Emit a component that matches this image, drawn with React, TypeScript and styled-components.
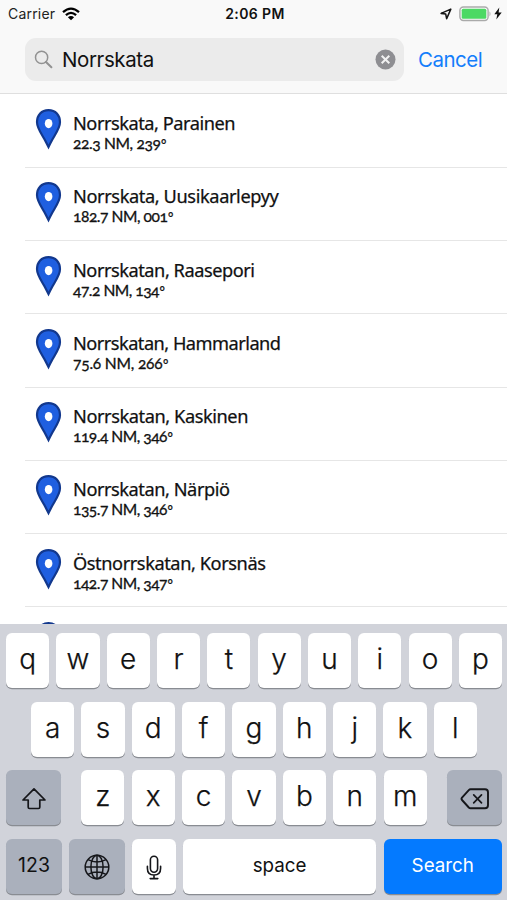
import React from "react";
import styled, { createGlobalStyle } from "styled-components";

const Global = createGlobalStyle`
  * { box-sizing: border-box; }
  body { margin: 0; background: #fff; overflow: hidden; }
`;

const Screen = styled.div`
  width: 507px;
  height: 900px;
  display: flex;
  flex-direction: column;
  overflow: hidden;
  background: #fff;
  color: #111;
  font-family: Inter, "Liberation Sans", sans-serif;
`;

const Header = styled.header`
  height: 94.4px;
  flex: none;
  background: #f9f9f9;
  border-bottom: 1px solid #dfdfdf;
`;

const StatusBar = styled.div`
  height: 27px;
  display: grid;
  grid-template-columns: 1fr auto 1fr;
  align-items: center;
  padding: 0 5px 0 8px;
`;

const Carrier = styled.div`
  display: flex;
  align-items: center;
  gap: 7px;
  font-size: 14px;
  letter-spacing: 0.2px;
  color: #222;
`;

const Clock = styled.div`
  font-size: 14px;
  font-weight: 600;
  letter-spacing: 0.4px;
`;

const StatusIcons = styled.div`
  display: flex;
  align-items: center;
  justify-content: flex-end;
`;

const SearchRow = styled.div`
  display: flex;
  align-items: center;
  padding: 11px 0 0 25px;
`;

const SearchField = styled.div`
  width: 379px;
  height: 43px;
  flex: none;
  display: flex;
  align-items: center;
  padding: 0 8px 0 9px;
  border-radius: 11px;
  background: #ebebeb;
`;

const Query = styled.span`
  flex: 1;
  margin-left: 9px;
  padding-bottom: 1px;
  font-size: 20.5px;
  letter-spacing: -0.4px;
`;

const Cancel = styled.span`
  margin-left: 14px;
  padding-bottom: 1px;
  font-size: 20.5px;
  letter-spacing: -0.5px;
  color: #147efb;
`;

const Results = styled.main`
  height: 529.6px;
  flex: none;
  overflow: hidden;
  padding-left: 25px;
`;

const Result = styled.div`
  height: 73.3px;
  display: flex;
  padding: 14.6px 0 0 10px;
  border-bottom: 1px solid #e6e6e6;
`;

const ResultText = styled.div`
  margin-left: 11px;
  padding-top: 2px;
  font-family: "Noto Sans", sans-serif;
  white-space: nowrap;
`;

const Place = styled.div<{ $track: number }>`
  font-size: 18.2px;
  line-height: 24px;
  -webkit-text-stroke: 0.25px #111;
  letter-spacing: ${(p) => p.$track}px;
`;

const Bearing = styled.div<{ $track: number }>`
  font-family: Lato, "Noto Sans", sans-serif;
  font-size: 15.6px;
  line-height: 17px;
  font-feature-settings: "onum";
  -webkit-text-stroke: 0.3px #111;
  letter-spacing: ${(p) => p.$track}px;
`;

const Degree = styled.span`
  margin-left: 0.5px;
  font-size: 13px;
`;

const Keyboard = styled.section`
  flex: 1;
  display: flex;
  flex-direction: column;
  gap: 13.4px;
  padding: 9.4px 5px 0 6px;
  background: #d1d3da;
`;

const KeyRow = styled.div<{ $inset?: number }>`
  height: 55.1px;
  flex: none;
  display: flex;
  justify-content: space-between;
  padding: 0 ${(p) => p.$inset ?? 0}px;
`;

const KeyGroup = styled.div`
  display: flex;
  gap: 7.2px;
`;

const Key = styled.div<{ $w?: number; $tone?: "white" | "gray" | "blue"; $size?: number }>`
  width: ${(p) => p.$w ?? 43.2}px;
  height: 55.1px;
  flex: none;
  display: flex;
  align-items: center;
  justify-content: center;
  border-radius: 6px;
  background: ${(p) => (p.$tone === "blue" ? "#047aff" : p.$tone === "gray" ? "#aab0bc" : "#fff")};
  color: ${(p) => (p.$tone === "blue" ? "#fff" : "#111")};
  box-shadow: 0 1.3px 0 #898c92;
  font-size: ${(p) => p.$size ?? 28}px;
  font-weight: ${(p) => (p.$size ? 400 : 300)};
  -webkit-text-stroke: ${(p) => (p.$size ? 0 : 0.25)}px #111;
  padding-bottom: ${(p) => (p.$size ? 2 : 3)}px;
`;

const IconKey = styled(Key)`
  padding: 2px 0 0;
`;

/* Place, bearing without its degree sign, and the line widths in pixels. */
const results: [string, string, number, number][] = [
  ["Norrskata, Parainen", "22.3 NM, 239", 162, 87.5],
  ["Norrskata, Uusikaarlepyy", "182.7 NM, 001", 205.5, 94.5],
  ["Norrskatan, Raasepori", "47.2 NM, 134", 181.5, 86],
  ["Norrskatan, Hammarland", "75.6 NM, 266", 207.5, 89.5],
  ["Norrskatan, Kaskinen", "119.4 NM, 346", 175, 94],
  ["Norrskatan, Närpiö", "135.7 NM, 346", 156.5, 94],
  ["Östnorrskatan, Korsnäs", "142.7 NM, 347", 192.5, 94],
];

const measurer = document.createElement("span");

/* Tracks a line so that its advance equals the requested width. */
function trackFor(text: string, width: number, font: string, features = "normal") {
  measurer.style.font = font;
  measurer.style.fontFeatureSettings = features;
  measurer.style.whiteSpace = "pre";
  measurer.textContent = text;
  document.body.appendChild(measurer);
  const natural = measurer.getBoundingClientRect().width;
  measurer.remove();
  return (width - natural) / text.length;
}

const Wifi = () => (
  <svg width="18" height="14" viewBox="0 0 18 14" fill="none" stroke="#000" strokeWidth="2.3">
    <path d="M1 5.1Q9-1.9 17 5.1M3.9 8.1Q9 3.6 14.1 8.1" />
    <path d="M5.9 10.2Q9 7.6 12.1 10.2L9 13.2Z" fill="#000" stroke="none" />
  </svg>
);

const LocationIcon = styled.svg`
  margin-right: 7px;
`;

const Location = () => (
  <LocationIcon width="12" height="12" viewBox="0 0 13 13" fill="none" stroke="#151515" strokeWidth="1.7" strokeLinejoin="round">
    <path d="M11.7 1.2 1.2 5.8 6.2 6.6 7.2 11.6Z" />
  </LocationIcon>
);

const Battery = () => (
  <svg width="35" height="16" viewBox="0 0 35 16">
    <rect x=".9" y="1" width="28.2" height="13.5" rx="3.5" fill="#f9f9f9" stroke="#aaa" strokeWidth="1.4" />
    <rect x="2.7" y="2.8" width="24.6" height="9.9" rx="1.5" fill="#4cd964" />
    <path d="M30.5 5.2Q32.5 7.8 30.5 10.4Z" fill="#aaa" />
  </svg>
);

const Bolt = () => (
  <svg width="8" height="13" viewBox="0 0 8 13">
    <path d="M5.3.5.3 7.2H3.3L2.3 12.5 7.7 5.4H4.6Z" fill="#111" />
  </svg>
);

const Magnifier = () => (
  <svg width="19" height="19" viewBox="0 0 19 19" fill="none" stroke="#929292" strokeWidth="1.5">
    <circle cx="7.6" cy="7.4" r="6.1" />
    <path d="m12 12 5.4 5.3" strokeWidth="2" strokeLinecap="round" />
  </svg>
);

const Clear = () => (
  <svg width="21" height="21" viewBox="0 0 21 21">
    <circle cx="10.5" cy="10.5" r="10" fill="#8e8e92" />
    <path d="m6.7 6.7 7.6 7.6m0-7.6-7.6 7.6" stroke="#f2f2f2" strokeWidth="2" />
  </svg>
);

const Pin = () => (
  <svg width="27" height="41" viewBox="0 0 27 41">
    <path
      d="M13.5 1.2C6.5 1.2 2 6.2 2 13.1C2 19.4 7.2 26 9.5 30.3Q11.4 34 13.5 38Q15.5 34 17.5 30.3C19.8 26 25 19.4 25 13.1C25 6.2 20.5 1.2 13.5 1.2Z"
      fill="#1f5fe0"
      stroke="#12388d"
      strokeWidth="2.2"
    />
    <ellipse cx="13.6" cy="14.6" rx="3.8" ry="4.6" fill="#fff" />
  </svg>
);

const Shift = () => (
  <svg width="26" height="24" viewBox="0 0 26 24" fill="none" stroke="#15161a" strokeWidth="1.7" strokeLinejoin="round">
    <path d="M13 1.8 24 13H18.8V20.2Q18.8 21.5 17.5 21.5H8.5Q7.2 21.5 7.2 20.2V13H2Z" />
  </svg>
);

const Backspace = () => (
  <svg width="30" height="22" viewBox="0 0 30 22" fill="none" stroke="#15161a" strokeWidth="1.9" strokeLinejoin="round" strokeLinecap="round">
    <path d="M10.5 1.3H25Q28 1.3 28 4.3V17.3Q28 20.3 25 20.3H10.5Q9.6 20.3 8.8 19.5L2 12Q1 10.8 2 9.6L8.8 2.1Q9.6 1.3 10.5 1.3Z" />
    <path d="m13.7 6.8 7.8 8m0-8-7.8 8" strokeWidth="1.7" />
  </svg>
);

const Globe = () => (
  <svg width="26" height="26" viewBox="0 0 26 26" fill="none" stroke="#15161a" strokeWidth="1.5">
    <circle cx="13" cy="13" r="11.8" />
    <ellipse cx="13" cy="13" rx="6.1" ry="11.8" />
    <path d="M13 1V25M1 13H25M4 5.6Q13 10.4 22 5.6M4 20.4Q13 15.6 22 20.4" />
  </svg>
);

const Mic = () => (
  <svg width="16" height="25" viewBox="0 0 16 25" fill="none" stroke="#15161a" strokeWidth="1.6" strokeLinecap="round">
    <rect x="4.4" y="1.2" width="7.2" height="16" rx="3.6" />
    <path d="M1.4 11.3V13.2C1.4 17.5 4 20 8 20S14.6 17.5 14.6 13.2V11.3M8 20V23.6M4.2 23.6H11.8" />
  </svg>
);

export default function App() {
  return (
    <Screen>
      <Global />
      <Header>
        <StatusBar>
          <Carrier>
            Carrier <Wifi />
          </Carrier>
          <Clock>2:06 PM</Clock>
          <StatusIcons>
            <Location />
            <Battery />
            <Bolt />
          </StatusIcons>
        </StatusBar>
        <SearchRow>
          <SearchField>
            <Magnifier />
            <Query>Norrskata</Query>
            <Clear />
          </SearchField>
          <Cancel>Cancel</Cancel>
        </SearchRow>
      </Header>
      <Results>
        {results.map(([place, bearing, w1, w2]) => (
          <Result key={place}>
            <Pin />
            <ResultText>
              <Place $track={trackFor(place, w1, '18.2px "Noto Sans"')}>{place}</Place>
              <Bearing $track={trackFor(bearing, w2, "15.6px Lato", '"onum"')}>
                {bearing}
                <Degree>°</Degree>
              </Bearing>
            </ResultText>
          </Result>
        ))}
        <Result>
          <Pin />
        </Result>
      </Results>
      <Keyboard>
        <KeyRow>
          {[..."qwertyuiop"].map((c) => (
            <Key key={c}>{c}</Key>
          ))}
        </KeyRow>
        <KeyRow $inset={25}>
          {[..."asdfghjkl"].map((c) => (
            <Key key={c}>{c}</Key>
          ))}
        </KeyRow>
        <KeyRow>
          <IconKey $w={55} $tone="gray">
            <Shift />
          </IconKey>
          <KeyGroup>
            {[..."zxcvbnm"].map((c) => (
              <Key key={c}>{c}</Key>
            ))}
          </KeyGroup>
          <IconKey $w={55} $tone="gray">
            <Backspace />
          </IconKey>
        </KeyRow>
        <KeyRow>
          <Key $w={56} $tone="gray" $size={19.5}>
            123
          </Key>
          <IconKey $w={56} $tone="gray">
            <Globe />
          </IconKey>
          <IconKey>
            <Mic />
          </IconKey>
          <Key $w={193.5} $size={18.8}>
            space
          </Key>
          <Key $w={118.5} $tone="blue" $size={18.8}>
            Search
          </Key>
        </KeyRow>
      </Keyboard>
    </Screen>
  );
}
